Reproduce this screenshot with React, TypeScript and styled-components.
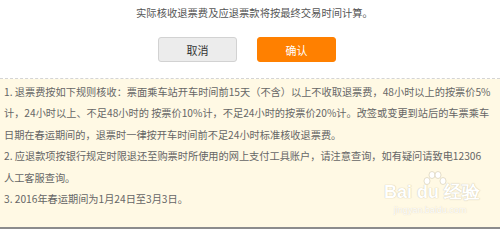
import React from 'react';
import styled, {createGlobalStyle} from 'styled-components';

const GlobalStyle = createGlobalStyle`
    html, body {
        margin: 0;
        padding: 0;
        background: #ffffff;
    }
    body {
        font-family: "Noto Sans CJK SC", "Noto Sans", "Liberation Sans", sans-serif;
    }
`;

const Page = styled.div`
    width: 500px;
    height: 229px;
    display: flex;
    flex-direction: column;
    overflow: hidden;
`;

const ConfirmArea = styled.div`
    height: 79px;
    display: flex;
    flex-direction: column;
    align-items: center;
    padding-top: 5px;
    box-sizing: border-box;
    border-bottom: 1px dashed #d4d4d4;
`;

const Notice = styled.div`
    font-size: 10.3px;
    line-height: 16px;
    color: #555555;
    padding-left: 9px;
    white-space: nowrap;
`;

const ButtonRow = styled.div`
    display: flex;
    gap: 20px;
    margin-top: 16px;
    padding-right: 6px;
`;

const Button = styled.button<{$primary?: boolean}>`
    width: 79px;
    height: 25px;
    box-sizing: border-box;
    border-radius: 3px;
    font-family: inherit;
    font-size: 11px;
    padding: 0;
    cursor: pointer;
    border: 1px solid ${(p) => (p.$primary ? '#ff8000' : '#d2d2d2')};
    background: ${(p) => (p.$primary ? '#ff8000' : '#ececec')};
    color: ${(p) => (p.$primary ? '#ffffff' : '#333333')};
`;

const Rules = styled.div`
    position: relative;
    flex: 1;
    background: #fff9e4;
    border-bottom: 2px solid #8c8c8c;
    padding: 1.5px 2px 0 4px;
    font-size: 10.2px;
    line-height: 21.5px;
    color: #666666;
`;

const Rule = styled.p`
    margin: 0;
    white-space: nowrap;
`;

const Watermark = styled.div`
    position: absolute;
    left: 384px;
    top: 104px;
    display: flex;
    flex-direction: column;
    align-items: flex-start;
    color: #ffffff;
    pointer-events: none;
`;

const MarkTitle = styled.div`
    display: flex;
    align-items: center;
    font-family: "Liberation Sans", sans-serif;
    font-size: 18px;
    font-weight: bold;
    line-height: 18px;
    text-shadow: 0 0 1px rgba(200, 190, 160, 0.9), 0 0 1px rgba(200, 190, 160, 0.6);
`;

const MarkSub = styled.div`
    font-family: "Liberation Sans", sans-serif;
    font-size: 9px;
    line-height: 10px;
    margin-top: 4px;
    margin-left: 10px;
    text-shadow: 0 0 1px rgba(200, 190, 160, 0.8);
`;

const Paw = () => (
    <svg width="26" height="22" viewBox="0 0 26 22" style={{position: 'absolute', left: 38, top: -13}}>
        <g fill="#ffffff" stroke="rgba(200,190,160,0.7)" strokeWidth="0.7">
            <ellipse cx="5" cy="11" rx="3" ry="3.5" />
            <ellipse cx="10" cy="5" rx="3" ry="3.5" />
            <ellipse cx="16" cy="5" rx="3" ry="3.5" />
            <ellipse cx="21" cy="11" rx="3" ry="3.5" />
        </g>
    </svg>
);

export default function App() {
    return (
        <Page>
            <GlobalStyle />
            <ConfirmArea>
                <Notice>实际核收退票费及应退票款将按最终交易时间计算。</Notice>
                <ButtonRow>
                    <Button>取消</Button>
                    <Button $primary>确认</Button>
                </ButtonRow>
            </ConfirmArea>
            <Rules>
                <Rule>
                    1. 退票费按如下规则核收：票面乘车站开车时间前15天（不含）以上不收取退票费，48小时以上的按票价5%
                    <br />
                    计，24小时以上、不足48小时的 按票价10%计，不足24小时的按票价20%计。改签或变更到站后的车票乘车
                    <br />
                    日期在春运期间的，退票时一律按开车时间前不足24小时标准核收退票费。
                </Rule>
                <Rule>
                    2. 应退款项按银行规定时限退还至购票时所使用的网上支付工具账户，请注意查询，如有疑问请致电12306
                    <br />
                    人工客服查询。
                </Rule>
                <Rule>3. 2016年春运期间为1月24日至3月3日。</Rule>
                <Watermark>
                    <Paw />
                    <MarkTitle>Bai du 经验</MarkTitle>
                    <MarkSub>jingyan.baidu.com</MarkSub>
                </Watermark>
            </Rules>
        </Page>
    );
}
